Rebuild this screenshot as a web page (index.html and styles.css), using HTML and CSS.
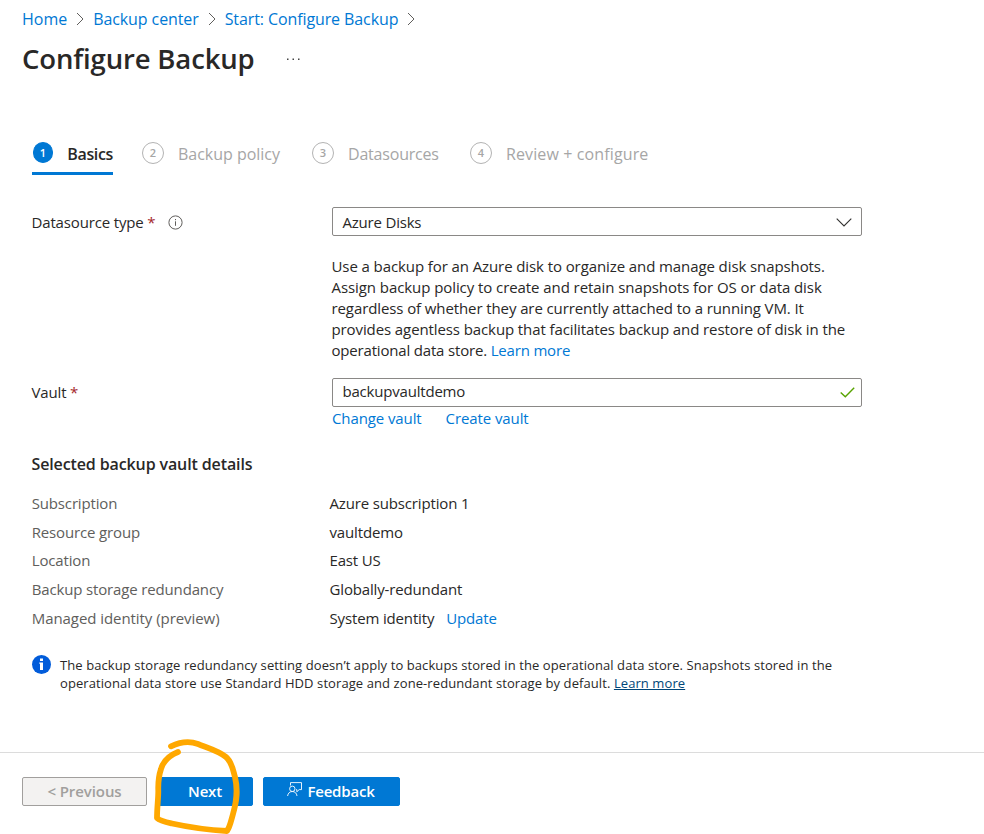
FILE: index.html
```html
<!DOCTYPE html>
<html lang="en">
<head>
<meta charset="utf-8">
<title>Configure Backup</title>
<link rel="stylesheet" href="styles.css">
</head>
<body>
<header class="header">
  <nav class="crumbs">
    <a class="link crumb-home">Home</a>
    <svg class="sep" viewBox="0 0 8 14"><path d="M1 1l6 6-6 6"/></svg>
    <a class="link crumb-center">Backup center</a>
    <svg class="sep" viewBox="0 0 8 14"><path d="M1 1l6 6-6 6"/></svg>
    <a class="link crumb-start">Start: Configure Backup</a>
    <svg class="sep" viewBox="0 0 8 14"><path d="M1 1l6 6-6 6"/></svg>
  </nav>
  <div class="title-row">
    <h1 class="title">Configure Backup</h1>
    <svg class="more" viewBox="0 0 15 3"><path d="M1 .5h1.5v1.5H1zM6.5 .5H8v1.5H6.5zM12 .5h1.5v1.5H12z"/></svg>
  </div>
</header>

<ol class="steps">
  <li class="step step-basics active"><span class="num">1</span><span class="name">Basics</span></li>
  <li class="step step-policy"><span class="num">2</span><span class="name">Backup policy</span></li>
  <li class="step step-sources"><span class="num">3</span><span class="name">Datasources</span></li>
  <li class="step step-review"><span class="num">4</span><span class="name">Review + configure</span></li>
</ol>

<main class="form">
  <div class="row">
    <div class="label"><span>Datasource type</span><span class="req">*</span>
      <svg class="hint" viewBox="0 0 15 15"><circle cx="7.5" cy="7.5" r="6.6"/><path d="M7.5 6.3v4.5M7.5 4v1.2"/></svg>
    </div>
    <div class="control">
      <div class="field field-type"><span>Azure Disks</span>
        <svg class="chevron" viewBox="0 0 16 9"><path d="M.7.7L8 8 15.300.7"/></svg>
      </div>
      <p class="desc">
        <span class="line d1">Use a backup for an Azure disk to organize and manage disk snapshots.</span>
        <span class="line d2">Assign backup policy to create and retain snapshots for OS or data disk</span>
        <span class="line d3">regardless of whether they are currently attached to a running VM. It</span>
        <span class="line d4">provides agentless backup that facilitates backup and restore of disk in the</span>
        <span class="line d5">operational data store. <a class="link">Learn more</a></span>
      </p>
    </div>
  </div>
  <div class="row">
    <div class="label label-vault"><span>Vault</span><span class="req">*</span></div>
    <div class="control">
      <div class="field field-vault"><span>backupvaultdemo</span>
        <svg class="check" viewBox="0 0 15 11"><path d="M.7 5.500L5.300 9.800 14.200.8"/></svg>
      </div>
      <div class="vault-links"><a class="link">Change vault</a><a class="link">Create vault</a></div>
    </div>
  </div>

  <h2 class="subhead">Selected backup vault details</h2>
  <dl class="details">
    <dt>Subscription</dt><dd>Azure subscription 1</dd>
    <dt>Resource group</dt><dd>vaultdemo</dd>
    <dt>Location</dt><dd>East US</dd>
    <dt>Backup storage redundancy</dt><dd>Globally-redundant</dd>
    <dt class="identity">Managed identity (preview)</dt><dd>System identity<a class="link update">Update</a></dd>
  </dl>

  <div class="note">
    <svg class="info" viewBox="0 0 19 19"><circle cx="9.500" cy="9.500" r="9.500"/><path d="M8 3.500h3v2.500H8zM7.300 7.500H11v7.500H8V8.800h-.7z"/></svg>
    <p class="note-text">
      <span class="line">The backup storage redundancy setting doesn’t apply to backups stored in the operational data store. Snapshots stored in the</span>
      <span class="line">operational data store use Standard HDD storage and zone-redundant storage by default. <a class="dark-link">Learn more</a></span>
    </p>
  </div>
</main>

<footer class="footer">
  <button class="btn previous">&lt; Previous</button>
  <button class="btn next">Next</button>
  <button class="btn feedback">
    <svg class="person" viewBox="0 0 15 15"><path d="M3.500 3.500V.6h11v7h-2.300l-2.400 2.200V7.600H9"/><circle cx="5.300" cy="6.800" r="2.700"/><path d="M.6 14c.3-2.800 2.200-4.500 4.700-4.500S9.700 11.200 10 14"/></svg>
    <span>Feedback</span>
  </button>
  <svg class="scribble" viewBox="0 0 100 100"><path d="M21 11.300C30 7 40 6 48 9C58 13 69 16 76 22C82 27 83 35 85 42C88 55 87 65 83 79C81 86 80 92 77 96C58 95 38 92 22 88.500C15 87 10 86 7 83C7 73 8.300 64 8.300 56C8 48 9 40 11 34C13 27 18 21 28 17"/></svg>
</footer>
</body>
</html>
```

FILE: styles.css
```css
* { box-sizing: border-box; }
body {
  margin: 0;
  height: 834px;
  overflow: hidden;
  background: #fff;
  color: #292827;
  font: 15px/21px "Open Sans", "Noto Sans", sans-serif;
  letter-spacing: -0.2px;
  white-space: nowrap;
}
h1, h2, p, dl, dd, ol { margin: 0; padding: 0; }
svg { display: block; fill: none; flex: none; }
.link { color: #0078d4; }

.header { height: 139px; padding: 8px 22px 0; }
.crumbs { display: flex; align-items: center; height: 22px; font-size: 16px; }
.crumb-home { letter-spacing: 0; }
.crumb-center, .crumb-start { letter-spacing: -0.100px; }
.sep { width: 8px; height: 14px; margin: 0 9px; stroke: #605e5c; stroke-width: 1; }
.title-row { display: flex; align-items: center; height: 36px; margin-top: 11px; }
.title { font-size: 27.500px; line-height: 36px; font-weight: 600; width: 264px; letter-spacing: -0.150px; }
.more { width: 15px; height: 3px; fill: #444; }

.steps { display: flex; height: 36px; padding-left: 32px; list-style: none; }
.step { display: flex; height: 36px; padding-top: 3px; color: #a6a6a6; font-size: 16px; line-height: 24px; }
.num {
  width: 22px; height: 22px; margin-right: 14px;
  border: 1px solid #b3b3b3; border-radius: 50%;
  font-size: 11px; line-height: 20px; font-weight: 600; text-align: center; letter-spacing: 0;
}
.step-basics { width: 81px; margin-right: 29px; letter-spacing: -0.350px; }
.step-policy { width: 170px; letter-spacing: -0.020px; }
.step-sources { width: 158px; }
.step-review { letter-spacing: 0.120px; }
.active { color: #292827; font-weight: 600; border-bottom: 3px solid #0078d4; }
.active .num { width: 21px; height: 21px; margin-left: .5px; background: #0078d4; border-color: #0078d4; color: #fff; }

.form { padding: 32px 0 0 32px; height: 577px; }
.row { display: flex; }
.label { display: flex; width: 300px; height: 31px; align-items: center; text-indent: -.5px; letter-spacing: -0.150px; }
.label-vault { height: 29px; }
.req { color: #a4262c; margin-left: 4px; }
.hint { width: 15px; height: 15px; margin-left: 12.500px; stroke: #605e5c; }
.control { width: 530px; }
.field {
  display: flex; justify-content: space-between;
  height: 29px; padding: 0 9.500px; border: 1px solid #8a8886; border-radius: 2px;
}
.field-type { line-height: 29px; }
.field-vault { line-height: 25px; }
.chevron { width: 16px; height: 9px; margin: 9.500px 0 0 0; stroke: #323130; stroke-width: 1.100; }
.check { width: 15px; height: 11px; margin: 7.500px -3px 0 0; stroke: #57a300; stroke-width: 1.400; }
.desc { height: 142px; padding-top: 20px; text-indent: -.5px; }
.line { display: block; }
.d1 { letter-spacing: -0.093px; }
.d2 { letter-spacing: -0.073px; }
.d3, .d4 { letter-spacing: -0.100px; }
.d5 { letter-spacing: -0.180px; }
.vault-links { display: flex; gap: 24px; padding-top: 1px; letter-spacing: -0.100px; }

.subhead { margin-top: 24px; font-size: 16px; line-height: 22px; font-weight: 600; letter-spacing: -0.120px; text-indent: -.5px; }
.details { display: grid; grid-template-columns: 297.500px 1fr; grid-auto-rows: 28.750px; margin-top: 13.800px; line-height: 28.750px; letter-spacing: -0.150px; }
.details dt { color: #605e5c; text-indent: -.3px; }
.details .identity { letter-spacing: -0.060px; }
.update { margin-left: 12px; }

.note { display: flex; margin-top: 22.200px; font-size: 13px; line-height: 18px; letter-spacing: 0.085px; }
.info { width: 19px; height: 19px; margin-right: 9px; fill: #015cda; }
.info path { fill: #fff; }
.note-text { padding-top: 1px; }
.dark-link { color: #004578; text-decoration: underline; }

.footer { position: relative; display: flex; height: 82px; padding: 24px 22px; border-top: 1px solid #dcdcdc; }
.btn {
  display: flex; align-items: center; justify-content: center; height: 29px; padding: 0 1px 2px 0;
  border: 1px solid #0078d4; border-radius: 2px; background: #0078d4; color: #fff;
  font: 600 15px/20px "Open Sans", sans-serif; letter-spacing: -0.2px;
}
.previous { width: 125px; padding-right: 0; background: #f3f2f1; border-color: #a19f9d; color: #a19f9d; letter-spacing: -0.080px; }
.next { width: 95px; margin-left: 11px; }
.feedback { width: 137px; margin-left: 10px; }
.person { width: 15px; height: 15px; margin: -2px 5px 0 0; stroke: #fff; stroke-width: .9; }
.scribble { position: absolute; left: 150px; top: -18px; width: 100px; height: 100px; overflow: visible; stroke: #ffa800; stroke-width: 5.800; stroke-linecap: round; stroke-linejoin: round; }
```
